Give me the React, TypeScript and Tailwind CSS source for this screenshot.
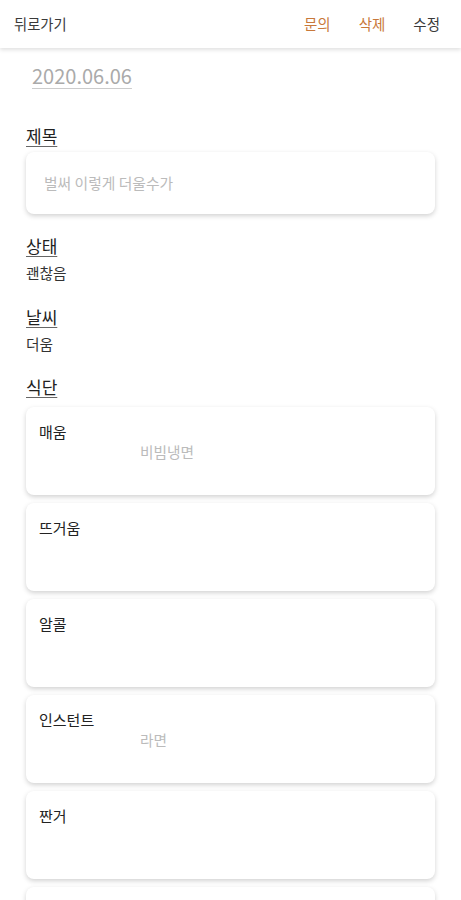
import React from "react";

const font = { fontFamily: '"Noto Sans CJK KR", "Noto Sans", sans-serif' };

const meals: { label: string; value: string }[] = [
  { label: "매움", value: "비빔냉면" },
  { label: "뜨거움", value: "" },
  { label: "알콜", value: "" },
  { label: "인스턴트", value: "라면" },
  { label: "짠거", value: "" },
  { label: "", value: "" },
];

function Label({ children, className = "" }: { children: React.ReactNode; className?: string }) {
  return (
    <div className={"text-[17px] leading-[24px] text-[#222] " + className}>
      <span className="underline underline-offset-[3px] decoration-[#666] decoration-1">{children}</span>
    </div>
  );
}

export default function App() {
  return (
    <div style={font} className="w-[461px] h-[900px] overflow-hidden bg-white">
      <header className="h-12 flex items-center justify-between pl-[14px] pr-[21px] bg-white shadow-[0_2px_4px_rgba(0,0,0,0.12)] relative z-10">
        <span className="text-[14.3px] text-[#3a3a3a]">뒤로가기</span>
        <div className="flex items-center gap-[28px] text-[14.5px]">
          <span className="text-[#c8783a]">문의</span>
          <span className="text-[#c8783a]">삭제</span>
          <span className="text-[#3a3a3a]">수정</span>
        </div>
      </header>
      <main className="px-[26px] pt-[15px]">
        <div className="ml-[6px] text-[20px] leading-[26px] text-[#aaa]">
          <span className="underline underline-offset-[4px] decoration-[#ccc] decoration-1">2020.06.06</span>
        </div>
        <Label className="mt-[35px]">제목</Label>
        <div className="mt-[4px] h-[62px] rounded-[8px] bg-white shadow-[0_2px_5px_rgba(0,0,0,0.18)] flex items-center px-[18px]">
          <span className="text-[14.8px] text-[#bbb]">벌써 이렇게 더울수가</span>
        </div>
        <Label className="mt-[20px]">상태</Label>
        <div className="mt-[5px] text-[14.7px] leading-[20px] text-[#333]">괜찮음</div>
        <Label className="mt-[22px]">날씨</Label>
        <div className="mt-[5px] text-[14.7px] leading-[20px] text-[#333]">더움</div>
        <Label className="mt-[21px]">식단</Label>
        <div className="mt-[8px] flex flex-col gap-[8px]">
          {meals.map((m, i) => (
            <div
              key={i}
              className="h-[88px] shrink-0 rounded-[8px] bg-white shadow-[0_2px_5px_rgba(0,0,0,0.18)] px-[13px] pt-[15px]"
            >
              <div className="text-[15px] leading-[20px] text-[#222] h-[20px]">{m.label}</div>
              <div className="ml-[101px] text-[14.7px] leading-[20px] text-[#bbb] h-[20px]">{m.value}</div>
            </div>
          ))}
        </div>
      </main>
    </div>
  );
}
